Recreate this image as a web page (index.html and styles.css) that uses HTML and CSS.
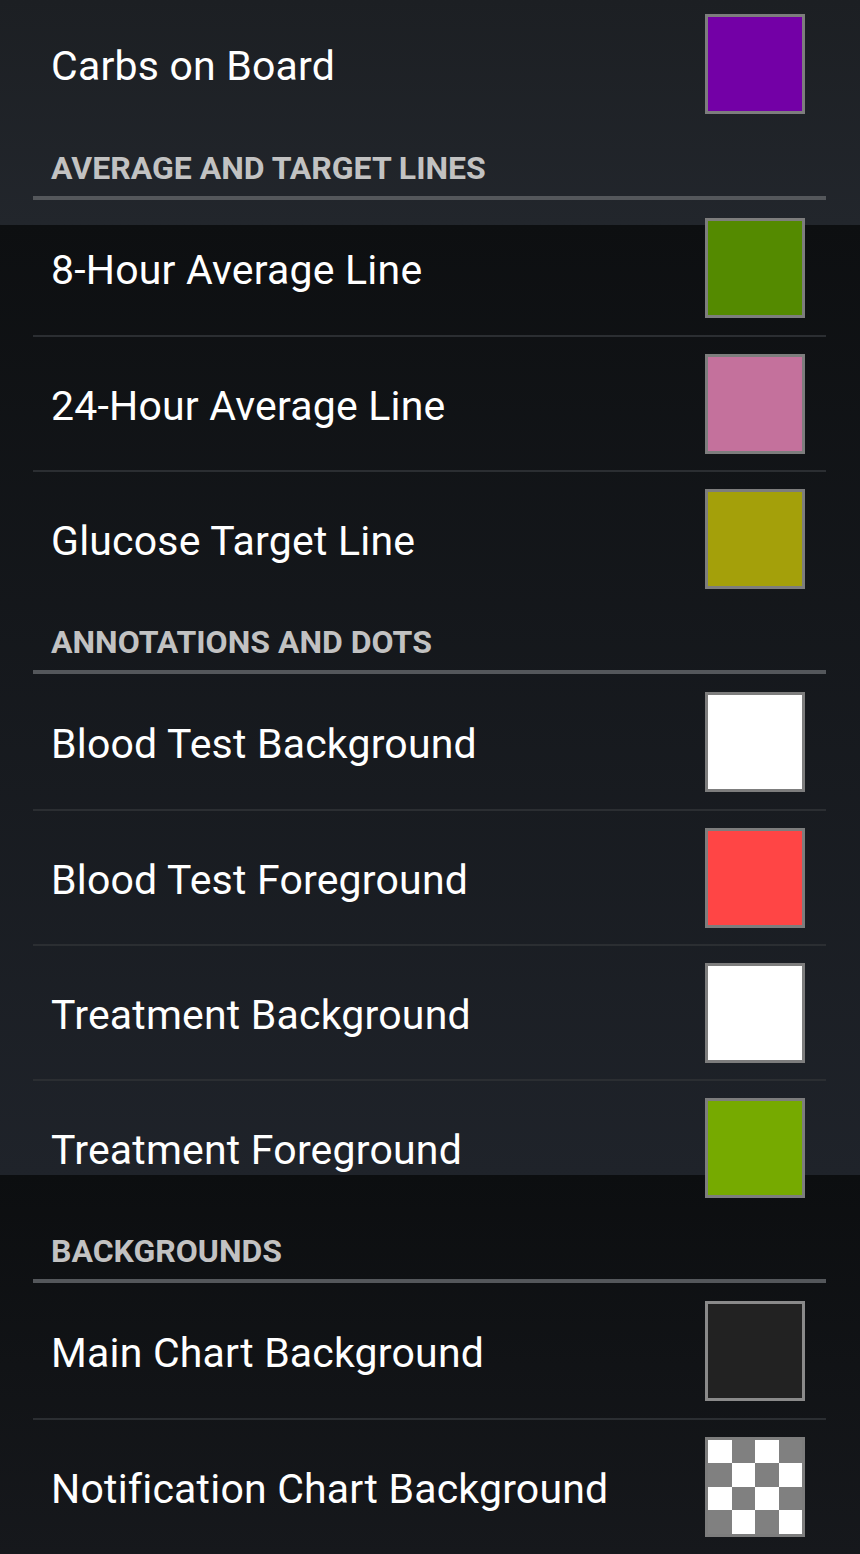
FILE: index.html
```html
<!DOCTYPE html>
<html>
<head>
<meta charset="utf-8">
<link rel="stylesheet" href="styles.css">
</head>
<body>
<div class="list">
  <div class="row first"><span class="label">Carbs on Board</span><span class="swatch purple"></span></div>
  <div class="header">AVERAGE AND TARGET LINES</div>
  <div class="row"><span class="label">8-Hour Average Line</span><span class="swatch green1"></span></div>
  <div class="row sep"><span class="label">24-Hour Average Line</span><span class="swatch pink"></span></div>
  <div class="row sep"><span class="label">Glucose Target Line</span><span class="swatch olive"></span></div>
  <div class="header">ANNOTATIONS AND DOTS</div>
  <div class="row"><span class="label">Blood Test Background</span><span class="swatch white"></span></div>
  <div class="row sep"><span class="label">Blood Test Foreground</span><span class="swatch red"></span></div>
  <div class="row sep"><span class="label">Treatment Background</span><span class="swatch white"></span></div>
  <div class="row sep"><span class="label">Treatment Foreground</span><span class="swatch green2"></span></div>
  <div class="header">BACKGROUNDS</div>
  <div class="row"><span class="label">Main Chart Background</span><span class="swatch dark"></span></div>
  <div class="row sep"><span class="label">Notification Chart Background</span><span class="swatch checker"><i></i><i></i><i></i><i></i><i></i><i></i><i></i><i></i><i></i><i></i><i></i><i></i><i></i><i></i><i></i><i></i></span></div>
</div>
</body>
</html>
```
FILE: styles.css
```css
html, body {
  margin: 0;
  padding: 0;
}
body {
  width: 860px;
  height: 1554px;
  overflow: hidden;
  font-family: Roboto, "Noto Sans", sans-serif;
  background: linear-gradient(to bottom,
    #1c1f23 0px, #22262c 225px,
    #0d0f11 225px, #1f232a 1175px,
    #0c0e10 1175px, #16181c 1554px);
}
.list {
  padding: 0 34px 0 33px;
}
.row {
  height: 135px;
  display: flex;
  align-items: center;
  justify-content: space-between;
  padding: 0 21px 0 18px;
  box-sizing: border-box;
}
.row.first {
  margin-top: -4px;
}
.row.sep {
  border-top: 2px solid #2b2e32;
}
.label {
  color: #ffffff;
  font-size: 41px;
  line-height: 48px;
  padding-top: 4px;
  letter-spacing: 0.2px;
}
.header {
  height: 69px;
  box-sizing: border-box;
  padding: 18px 18px 0;
  border-bottom: 4px solid #54575b;
  color: #c2c2c2;
  font-size: 32px;
  font-weight: bold;
  line-height: 38px;
}
.swatch {
  width: 100px;
  height: 100px;
  box-sizing: border-box;
  border: 3px solid #7d7d7d;
  flex: none;
}
.purple { background: #7300a6; }
.green1 { background: #548a00; }
.pink { background: #c4719c; }
.olive { background: #a4a00a; }
.white { background: #ffffff; }
.red { background: #ff4545; }
.green2 { background: #76aa00; }
.dark { background: #222222; border-color: #8a8a8a; }
.checker {
  display: grid;
  grid-template-columns: repeat(4, 1fr);
  grid-template-rows: repeat(4, 1fr);
  background: #808080;
}
.checker i {
  background: #ffffff;
}
.checker i:nth-child(8n+2),
.checker i:nth-child(8n+4),
.checker i:nth-child(8n+5),
.checker i:nth-child(8n+7) {
  background: #808080;
}
```
